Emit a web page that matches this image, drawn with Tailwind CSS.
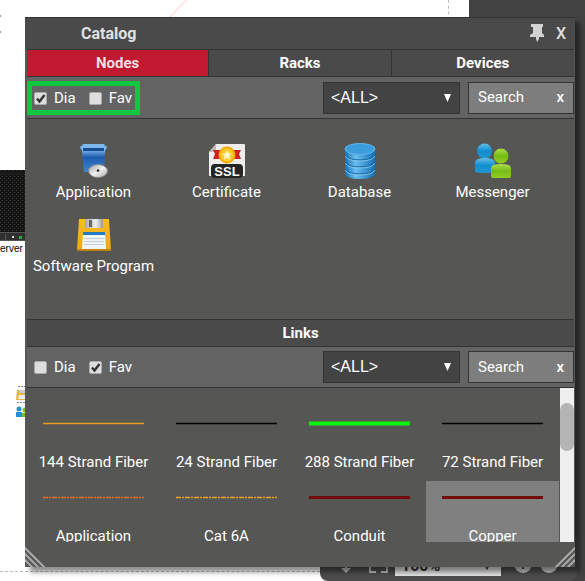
<!DOCTYPE html>
<html lang="en">
<head>
<meta charset="utf-8">
<meta name="viewport" content="width=device-width, initial-scale=1">
<title>Catalog</title>
<script src="https://cdn.jsdelivr.net/npm/@tailwindcss/browser@4"></script>
</head>
<body class="bg-white">
<main class="relative flex min-h-screen flex-col overflow-hidden font-['Roboto','Liberation_Sans',sans-serif] text-[15px] text-white">

  <!-- Diagram canvas behind the window -->
  <div class="absolute inset-0" aria-hidden="true">
    <div class="absolute inset-y-0 left-[469px] right-0 bg-[#424242]"></div>
    <div class="absolute left-[448px] top-0 h-5 border-l border-dashed border-[#bbb]"></div>
    <div class="absolute left-0 top-[571px] w-80 border-t border-dashed border-[#bbb]"></div>
    <svg class="absolute left-0 top-0" width="190" height="36" viewBox="0 0 190 36"><path d="M169 18 187-1" stroke="#f9c9b8" fill="none"/><path d="M0 16h1M0 32h1" stroke="#999" stroke-width="2"/></svg>
    <svg class="absolute left-0 top-[170px]" width="25" height="71" viewBox="0 0 25 71">
      <defs><pattern id="mesh" width="4" height="4" patternUnits="userSpaceOnUse"><path fill="#161616" d="M0 0h4v4H0z"/><path fill="#353535" d="M0 0h1v1H0zM2 2h1v1H2z"/></pattern></defs>
      <path fill="url(#mesh)" d="M0 0h25v62H0z"/><path fill="#303030" d="M0 62h25v9H0z"/><path stroke="#555" d="M0 62.500h25M5.500 64v6"/><path fill="#ddd" d="M12 66h2v2h-2z"/><path fill="#27a83c" d="M19 66h3v3h-3z"/><path fill="#555" d="M0 70h25v1H0z"/>
    </svg>
    <div class="absolute left-0 top-[243px] font-['Liberation_Sans',sans-serif] text-[10px] leading-3 text-black">erver</div>
    <svg class="absolute left-[15px] top-[384px]" width="12" height="34" viewBox="0 0 12 34"><path stroke="#888" stroke-dasharray="2 1" d="M3 2.500h8M2 18.500h9"/><path fill="#e4b83c" d="M2 6h10v10H1z"/><path fill="#ccc" d="M4 6h7v3H4z"/><path fill="#e8eef2" d="M4 11h8v4H3z"/><circle cx="4" cy="25" r="2.500" fill="#2290cc"/><path fill="#2290cc" d="M1 28h6v5H1z"/><circle cx="10" cy="26" r="2.500" fill="#80c21c"/><path fill="#80c21c" d="M7 29h6v4H7z"/></svg>
    <div class="absolute left-[320px] right-2 top-[540px] h-[41px] rounded-b-[8px] bg-[#4c4c4c]"></div>
    <div class="absolute left-[395px] top-[556px] h-5 w-[106px] overflow-hidden bg-[#e2e2e2] pl-[6px] text-[16px] font-bold leading-5 text-[#333]">100%<span class="absolute right-2 text-[12px]">▼</span></div>
    <svg class="absolute left-[320px] top-[555px]" width="260" height="26" viewBox="0 0 260 26"><path fill="#bbb" d="M25 7h2v6h4l-5 5-5-5h4zM49 10h2v6h5v2h-7zM66 10h2v8h-7v-2h5z"/><circle cx="203" cy="9" r="9" fill="#c4c4c4"/><circle cx="229" cy="9" r="9" fill="#c4c4c4"/><path stroke="#444" stroke-width="2" d="M203 4v10M198 9h10"/></svg>
  </div>

  <!-- Catalog window -->
  <section class="relative mb-[14px] ml-[25px] mr-[10px] mt-[17px] bg-[#565654] pl-[2px] pr-px shadow-[5px_5px_5px_rgba(0,0,0,0.45)]" aria-labelledby="window-title">
    <header class="-ml-[2px] -mr-px flex h-8 items-center justify-between border-t border-[#333] bg-[#4a4a4a] pl-14 pr-[9px] text-[#e0e0e0]">
      <h1 id="window-title" class="text-[16px] font-bold leading-8">Catalog</h1>
      <div class="flex items-start gap-3">
        <button type="button" aria-label="Pin"><svg width="14" height="18" viewBox="0 0 14 18"><path fill="#d2d2d2" d="M1 0h12v3h-1v6l2 2v2H9v2l-2 3-1-3v-2H0v-2l3-2V3H1z"/></svg></button>
        <button type="button" class="text-[16px] font-medium leading-5" aria-label="Close">X</button>
      </div>
    </header>

    <nav class="grid h-7 grid-cols-3 divide-x divide-[#333] border-y border-[#333] bg-[#4a4a4a] font-bold" role="tablist">
      <button type="button" role="tab" aria-selected="true" class="bg-[#c1192f] text-[#f4dfe2]">Nodes</button>
      <button type="button" role="tab" aria-selected="false">Racks</button>
      <button type="button" role="tab" aria-selected="false">Devices</button>
    </nav>

    <form class="flex h-[42px] items-center border-b border-[#333] bg-[#636363]">
      <div class="mt-px flex h-[34px] items-center border-[5px] border-[#10c840] pl-[2px] pr-[3px]">
        <label class="flex items-center gap-[7px]"><span class="grid"><input type="checkbox" checked class="peer col-start-1 row-start-1 size-[13px] appearance-none rounded-[2px] border border-[#aaa] bg-[#dedede]"><svg class="pointer-events-none invisible z-10 col-start-1 row-start-1 peer-checked:visible" width="13" height="13" viewBox="0 0 13 13"><path d="M3 6.500 5.500 9.500 10.500 3" fill="none" stroke="#333" stroke-width="2.400"/></svg></span>Dia</label>
        <label class="ml-[13px] flex items-center gap-[7px]"><span class="grid"><input type="checkbox" class="peer col-start-1 row-start-1 size-[13px] appearance-none rounded-[2px] border border-[#aaa] bg-[#dedede]"><svg class="pointer-events-none invisible z-10 col-start-1 row-start-1 peer-checked:visible" width="13" height="13" viewBox="0 0 13 13"><path d="M3 6.500 5.500 9.500 10.500 3" fill="none" stroke="#333" stroke-width="2.400"/></svg></span>Fav</label>
      </div>
      <div class="relative ml-auto w-[137px]">
        <select aria-label="Node category" class="block h-8 w-full appearance-none border border-[#333] bg-[#434343] pl-[7px] font-['Liberation_Sans',sans-serif] text-[16px]"><option>&lt;ALL&gt;</option></select>
        <svg class="pointer-events-none absolute right-2 top-3" width="9" height="8" viewBox="0 0 9 8"><path fill="#fff" d="M1 0h7L4.500 8z"/></svg>
      </div>
      <div class="ml-2 flex h-8 w-[106px] items-center border border-[#333] bg-[#7d7d7d] pl-[9px] pr-[9px]">
        <input type="text" aria-label="Search nodes" placeholder="Search" class="w-0 flex-1 bg-transparent placeholder:text-white">
        <button type="button" aria-label="Clear node search" class="font-medium">x</button>
      </div>
    </form>

    <ul class="grid min-h-[200px] grid-cols-4 content-start pr-[15px] pt-[18px]">
      <li class="flex h-[74px] flex-col items-center whitespace-nowrap pt-1 leading-[22px]">
        <span class="flex h-10 items-center"><svg width="30" height="36" viewBox="0 0 30 36"><defs><linearGradient id="box" x2="0" y2="1"><stop stop-color="#6da8e0"/><stop offset=".3" stop-color="#1e5cae"/><stop offset="1" stop-color="#3f87d2"/></linearGradient><linearGradient id="disc" x2="1" y2="1"><stop stop-color="#999"/><stop offset=".5" stop-color="#f1f1f1"/><stop offset="1" stop-color="#aaa"/></linearGradient></defs><path fill="#5f9edb" d="M1 4 4 1h21l3 3-2 4H3z"/><path fill="#174c92" d="M4 4h21v5H4z"/><path fill="url(#box)" d="M3 8h23l-1 21H5z"/><path fill="#7eb8ed" d="M4 1h21v4H4zM1 4l3-1v6zM28 4l-3-1v6z"/><ellipse cx="19" cy="28" rx="9.500" ry="6.500" fill="url(#disc)" stroke="#888" stroke-width=".7"/><ellipse cx="19" cy="27.500" rx="3" ry="2" fill="#ddd"/><circle cx="19" cy="27.500" r="1.200" fill="#222"/></svg></span>Application</li>
      <li class="flex h-[74px] flex-col items-center whitespace-nowrap pt-1 leading-[22px]">
        <span class="flex h-10 items-center"><svg width="38" height="36" viewBox="0 0 38 36"><path fill="#eee" d="M8 1h28q1 0 1 1v31H1V9z"/><path fill="#bbb" d="M8 1v8H1z"/><path fill="#cf2023" d="M5 7h28l-2 4 2 5H5l2-5z"/><circle cx="19" cy="12" r="8.500" fill="#f0a900"/><circle cx="19" cy="12" r="6.700" fill="#ffc928"/><path fill="#fff5c6" d="m19 7 1.500 3.200 3.500.5-2.600 2.400.7 3.600-3.100-1.700-3.100 1.700.7-3.600-2.600-2.400 3.500-.5z"/><rect x="3" y="21" width="32" height="14" rx="4" fill="#252525"/><text x="19" y="32.500" text-anchor="middle" fill="#fff" font-family="Liberation Sans, sans-serif" font-weight="bold" font-size="13">SSL</text></svg></span>Certificate</li>
      <li class="flex h-[74px] flex-col items-center whitespace-nowrap pt-1 leading-[22px]">
        <span class="flex h-10 items-center"><svg width="32" height="38" viewBox="0 0 32 38"><defs><linearGradient id="db"><stop stop-color="#1672b5"/><stop offset=".35" stop-color="#67bdf0"/><stop offset="1" stop-color="#176fb2"/></linearGradient></defs><path fill="url(#db)" d="M1 6v26q2 5 15 5t15-5V6z"/><path fill="none" stroke="#125d99" d="M1 13q3 5 15 5t15-5M1 20q3 5 15 5t15-5M1 27q3 5 15 5t15-5"/><path fill="none" stroke="#8ed3f7" stroke-width=".8" d="M1 14q3 5 15 5t15-5M1 21q3 5 15 5t15-5M1 28q3 5 15 5t15-5"/><ellipse cx="16" cy="7" rx="15" ry="5.500" fill="#3b9ddd" stroke="#64b7e8"/></svg></span>Database</li>
      <li class="flex h-[74px] flex-col items-center whitespace-nowrap pt-1 leading-[22px]">
        <span class="flex h-10 items-center"><svg width="38" height="36" viewBox="0 0 38 36"><defs><linearGradient id="blue" x2="0" y2="1"><stop stop-color="#63bde9"/><stop offset=".5" stop-color="#108ed0"/><stop offset="1" stop-color="#2297d2"/></linearGradient><linearGradient id="green" x2="0" y2="1"><stop stop-color="#b0df4b"/><stop offset=".5" stop-color="#75bc16"/><stop offset="1" stop-color="#93cd24"/></linearGradient></defs><circle cx="10.500" cy="8" r="7.500" fill="url(#blue)"/><path fill="url(#blue)" d="M1 20q0-5 10-5t10 5v9q-10 2-20 0z"/><circle cx="27" cy="13" r="7.500" fill="url(#green)"/><path fill="url(#green)" d="M17 25q0-4 10-4t10 4v8q0 2-2 2H19q-2 0-2-2z"/></svg></span>Messenger</li>
      <li class="flex h-[74px] flex-col items-center whitespace-nowrap pt-1 leading-[22px]">
        <span class="flex h-10 items-center"><svg width="34" height="32" viewBox="0 0 34 32"><defs><linearGradient id="disk" x2="0" y2="1"><stop stop-color="#f7bd1b"/><stop offset="1" stop-color="#eda91b"/></linearGradient><linearGradient id="metal"><stop stop-color="#aaa"/><stop offset=".6" stop-color="#eee"/><stop offset="1" stop-color="#999"/></linearGradient></defs><path fill="url(#disk)" d="M2 0h30l2 31H0z"/><path fill="#c18210" d="M0 30h34v2H0z"/><path fill="url(#metal)" d="M8 0h18v9H8z"/><path fill="#666" d="M12 1h3v7h-3z"/><path fill="#f1f5f8" d="M6 13h22l1 17H5z"/><path fill="#247bbd" d="M6 13h22v3H6z"/><path stroke="#c3cbd0" d="M7 19.500h20M7 22.500h20M7 25.500h20"/></svg></span>Software Program</li>
    </ul>

    <h2 class="h-7 border-y border-[#333] bg-[#4a4a4a] text-center font-bold leading-[26px]">Links</h2>

    <form class="flex h-[41px] items-center border-b border-[#333] bg-[#636363]">
      <div class="flex h-[34px] items-center border-[5px] border-transparent pl-[2px] pr-[3px]">
        <label class="flex items-center gap-[7px]"><span class="grid"><input type="checkbox" class="peer col-start-1 row-start-1 size-[13px] appearance-none rounded-[2px] border border-[#aaa] bg-[#dedede]"><svg class="pointer-events-none invisible z-10 col-start-1 row-start-1 peer-checked:visible" width="13" height="13" viewBox="0 0 13 13"><path d="M3 6.500 5.500 9.500 10.500 3" fill="none" stroke="#333" stroke-width="2.400"/></svg></span>Dia</label>
        <label class="ml-[13px] flex items-center gap-[7px]"><span class="grid"><input type="checkbox" checked class="peer col-start-1 row-start-1 size-[13px] appearance-none rounded-[2px] border border-[#aaa] bg-[#dedede]"><svg class="pointer-events-none invisible z-10 col-start-1 row-start-1 peer-checked:visible" width="13" height="13" viewBox="0 0 13 13"><path d="M3 6.500 5.500 9.500 10.500 3" fill="none" stroke="#333" stroke-width="2.400"/></svg></span>Fav</label>
      </div>
      <div class="relative ml-auto w-[137px]">
        <select aria-label="Link category" class="block h-8 w-full appearance-none border border-[#333] bg-[#434343] pl-[7px] font-['Liberation_Sans',sans-serif] text-[16px]"><option>&lt;ALL&gt;</option></select>
        <svg class="pointer-events-none absolute right-2 top-3" width="9" height="8" viewBox="0 0 9 8"><path fill="#fff" d="M1 0h7L4.500 8z"/></svg>
      </div>
      <div class="ml-2 flex h-8 w-[106px] items-center border border-[#333] bg-[#7d7d7d] pl-[9px] pr-[9px]">
        <input type="text" aria-label="Search links" placeholder="Search" class="w-0 flex-1 bg-transparent placeholder:text-white">
        <button type="button" aria-label="Clear link search" class="font-medium">x</button>
      </div>
    </form>

    <div class="flex h-[154px]">
      <ul class="mr-px grid flex-1 grid-cols-4 content-start overflow-hidden pt-[19px] leading-[22px]">
        <li class="flex h-[74px] flex-col items-center whitespace-nowrap"><svg class="mb-3 shrink-0" width="101" height="32"><path stroke="#e89c1c" stroke-width="1.500" d="M0 16.500h101"/></svg>144 Strand Fiber</li>
        <li class="flex h-[74px] flex-col items-center whitespace-nowrap"><svg class="mb-3 shrink-0" width="101" height="32"><path stroke="#000" stroke-width="1.500" d="M0 16.500h101"/></svg>24 Strand Fiber</li>
        <li class="flex h-[74px] flex-col items-center whitespace-nowrap"><svg class="mb-3 shrink-0" width="101" height="32"><path stroke="#0df20d" stroke-width="4" d="M0 16.500h101"/></svg>288 Strand Fiber</li>
        <li class="flex h-[74px] flex-col items-center whitespace-nowrap"><svg class="mb-3 shrink-0" width="101" height="32"><path stroke="#000" stroke-width="1.500" d="M0 16.500h101"/></svg>72 Strand Fiber</li>
        <li class="flex h-[74px] flex-col items-center whitespace-nowrap"><svg class="mb-3 shrink-0" width="101" height="32"><path stroke="#d9702a" stroke-width="1.500" stroke-dasharray="5 1 2 1" d="M0 16.500h101"/></svg>Application</li>
        <li class="flex h-[74px] flex-col items-center whitespace-nowrap"><svg class="mb-3 shrink-0" width="101" height="32"><path stroke="#eda42c" stroke-width="1.500" stroke-dasharray="5 1 2 1" d="M0 16.500h101"/></svg>Cat 6A</li>
        <li class="flex h-[74px] flex-col items-center whitespace-nowrap"><svg class="mb-3 shrink-0" width="101" height="32"><path stroke="#750c0c" stroke-width="3" d="M0 16.500h101"/></svg>Conduit</li>
        <li class="flex h-[74px] flex-col items-center whitespace-nowrap bg-[#808080]"><svg class="mb-3 shrink-0" width="101" height="32"><path stroke="#750c0c" stroke-width="3" d="M0 16.500h101"/></svg>Copper</li>
      </ul>
      <div class="w-[14px] bg-[#efefef] pt-[15px]"><div class="h-12 rounded-full bg-[#b4b4b4]"></div></div>
    </div>

    <footer class="-ml-[2px] -mr-px flex h-[25px] items-end justify-between" aria-hidden="true">
      <svg width="20" height="20" viewBox="0 0 20 20"><path stroke="#a9a9a9" stroke-width="2" fill="none" d="M-1 0 20 21M-1 6 14 21M-1 12 8 21"/></svg>
      <svg width="20" height="20" viewBox="0 0 20 20"><path stroke="#a9a9a9" stroke-width="2" fill="none" d="M21 0 0 21M21 6 6 21M21 12 12 21"/></svg>
    </footer>
  </section>
</main>
</body>
</html>
